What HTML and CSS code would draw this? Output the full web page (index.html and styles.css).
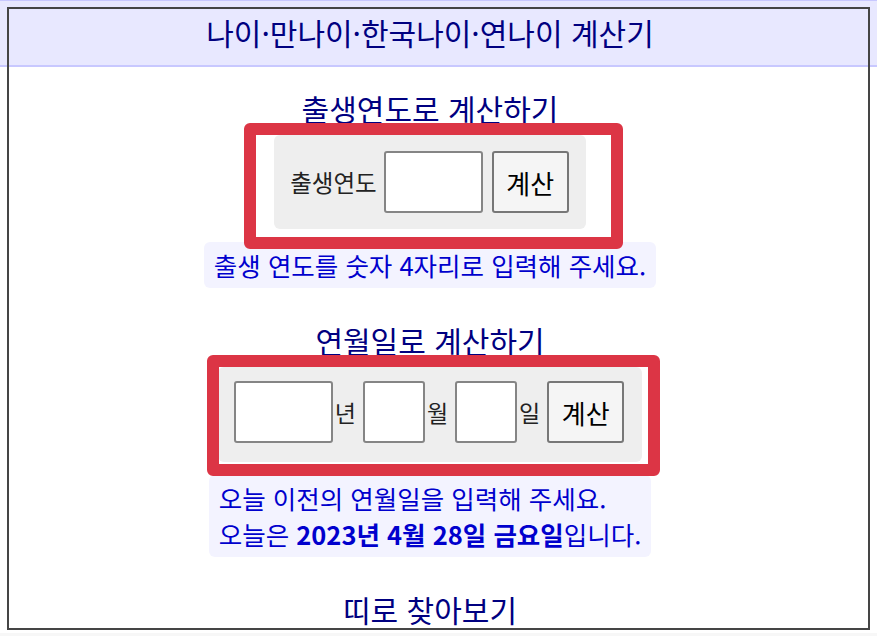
FILE: index.html
```html
<!DOCTYPE html>
<html lang="ko">
<head>
<meta charset="utf-8">
<title>나이·만나이·한국나이·연나이 계산기</title>
<link rel="stylesheet" href="styles.css">
</head>
<body>
<header class="topbar">
  <h1 class="site-title">나이·만나이·한국나이·연나이 계산기</h1>
</header>
<main class="frame">
  <div class="content">
    <section class="calc">
      <h2 class="section-title">출생연도로 계산하기</h2>
      <div class="form-wrap">
        <form class="form-box form-year">
          <label class="field-label" for="by">출생연도</label>
          <input class="num-input w-year" id="by" type="text">
          <button class="calc-btn" type="button">계산</button>
        </form>
        <div class="highlight hl-year"></div>
      </div>
      <p class="hint">출생 연도를 숫자 4자리로 입력해 주세요.</p>
    </section>

    <section class="calc calc-second">
      <h2 class="section-title">연월일로 계산하기</h2>
      <div class="form-wrap">
        <form class="form-box form-date">
          <input class="num-input w-year" type="text"><span class="unit">년</span>
          <input class="num-input w-small" type="text"><span class="unit">월</span>
          <input class="num-input w-small" type="text"><span class="unit">일</span>
          <button class="calc-btn" type="button">계산</button>
        </form>
        <div class="highlight hl-date"></div>
      </div>
      <p class="hint">오늘 이전의 연월일을 입력해 주세요.<br>오늘은 <b>2023년 4월 28일 금요일</b>입니다.</p>
    </section>

    <section class="calc calc-second">
      <h2 class="section-title">띠로 찾아보기</h2>
    </section>
  </div>
</main>
<div class="bottom-strip"></div>
</body>
</html>
```

FILE: styles.css
```css
html, body {
  margin: 0;
  padding: 0;
}
body {
  background: #ffffff;
  font-family: "Noto Sans CJK KR", "Noto Sans", sans-serif;
  overflow: hidden;
}
.topbar {
  box-sizing: border-box;
  height: 67px;
  background: #e8e8ff;
  border-top: 1px solid #c8c8ff;
  border-bottom: 2px solid #c8c8ff;
  padding-right: 17px;
}
.site-title {
  margin: 0;
  font-size: 30px;
  font-weight: normal;
  line-height: 62px;
  text-align: center;
  color: #000080;
}
.frame {
  position: relative;
  box-sizing: border-box;
  height: 623px;
  margin: -60px 7px 0 7px;
  border: 2px solid #454545;
  overflow: hidden;
}
.content {
  padding: 58px 17px 0 0;
  text-align: center;
}
.calc {
  display: flex;
  flex-direction: column;
  align-items: center;
  padding-top: 23px;
}
.calc-second {
  padding-top: 34px;
}
.section-title {
  margin: 0 0 9px;
  font-size: 30px;
  font-weight: normal;
  line-height: 36px;
  color: #000080;
}
.form-wrap {
  position: relative;
}
.form-box {
  display: flex;
  align-items: center;
  margin: 0;
  background: #eeeeee;
  border-radius: 6px;
}
.form-year {
  padding: 16px 17px 16px 16px;
}
.form-date {
  padding: 14px 18px 19px 16px;
}
.field-label {
  font-size: 23.5px;
  color: #222222;
  margin-right: 7px;
}
.num-input {
  box-sizing: border-box;
  height: 62px;
  border: 2px solid #858585;
  border-radius: 3px;
  background: #ffffff;
  margin: 0;
  padding: 0 4px;
  font-size: 22px;
}
.w-year { width: 99px; }
.w-small { width: 62px; }
.unit {
  font-size: 23px;
  color: #222222;
  margin: 0 7px 0 2px;
}
.calc-btn {
  box-sizing: border-box;
  width: 77px;
  height: 62px;
  margin: 0 0 0 9px;
  border: 2px solid #777777;
  border-radius: 3px;
  background: #f5f5f5;
  font-family: "Noto Sans CJK KR", sans-serif;
  font-size: 26px;
  color: #000000;
  padding: 0;
}
.form-date .calc-btn {
  margin-left: 0;
}
.highlight {
  position: absolute;
  border: 12px solid #dc3545;
  border-radius: 6px;
  pointer-events: none;
}
.hl-year {
  left: -30px;
  right: -37px;
  top: -12px;
  bottom: -20px;
}
.hl-date {
  left: -11px;
  right: -18px;
  top: -12px;
  bottom: -14px;
}
.hint {
  margin: 13px 0 0;
  padding: 5px 10px;
  background: #f3f3ff;
  border-radius: 6px;
  font-size: 25.5px;
  line-height: 36px;
  color: #0000cd;
  text-align: left;
}
.hint b {
  font-weight: bold;
}
.bottom-strip {
  height: 10px;
  margin-top: 3px;
  background: #f7f7f7;
}
```
